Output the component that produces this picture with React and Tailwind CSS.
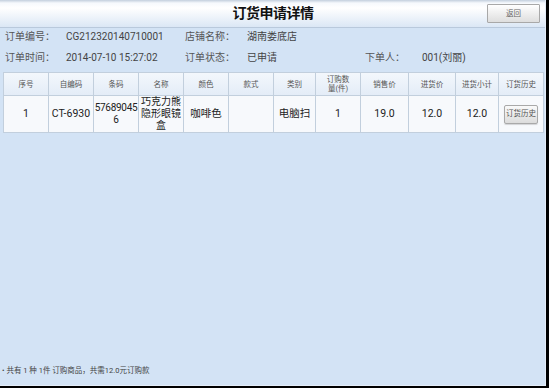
import React from "react";

const cols = [
  { w: 45, h: "序号", v: "1" },
  { w: 45, h: "自编码", v: "CT-6930" },
  { w: 45, h: "条码", v: "barcode" },
  { w: 45, h: "名称", v: "name" },
  { w: 45, h: "颜色", v: "咖啡色" },
  { w: 45, h: "款式", v: "" },
  { w: 42, h: "类别", v: "电脑扫" },
  { w: 45, h: "qty", v: "1" },
  { w: 48, h: "销售价", v: "19.0" },
  { w: 47, h: "进货价", v: "12.0" },
  { w: 43, h: "进货小计", v: "12.0" },
  { w: 45, h: "订货历史", v: "btn" },
];

function Cell({ v }) {
  if (v === "barcode")
    return (
      <span className="leading-[12px] block text-[10px] tracking-[-0.3px]">
        57689045
        <br />6
      </span>
    );
  if (v === "name")
    return (
      <span className="leading-[12px] block text-[10px]">
        巧克力熊
        <br />
        隐形眼镜
        <br />盒
      </span>
    );
  if (v === "btn")
    return (
      <button className="w-[34px] h-[19px] mx-auto block rounded-[2px] border border-[#a9a9a9] bg-gradient-to-b from-[#fafafa] to-[#dcdcdc] text-[7.5px] text-[#555] leading-none shadow-[0_1px_1px_rgba(0,0,0,0.15)]">
        订货历史
      </button>
    );
  return <span>{v}</span>;
}

export default function App() {
  const font = "font-['Roboto','Noto_Sans_CJK_SC',sans-serif]";
  return (
    <div className={`w-[549px] h-[388px] bg-black ${font}`}>
      <div className="w-[546px] h-[386px] bg-[#d3e3f5] border-r border-b border-[#e4edf8] flex flex-col">
        {/* header bar */}
        <div className="h-[28px] shrink-0 grid grid-cols-[1fr_auto_1fr] items-center [background-image:linear-gradient(to_bottom,#c3cfdd_0px,#f6f9fd_3px,#ffffff_8px,#dbe7f5_27px)] border-b border-[#b9c9dc]">
          <div />
          <div className="text-[14px] font-bold text-[#111] tracking-[-0.5px] pl-[1px]">订货申请详情</div>
          <div className="flex justify-end pr-[5px]">
            <button className="w-[53px] h-[19px] border border-[#a8a8a8] rounded-[1px] bg-gradient-to-b from-[#ffffff] to-[#dedede] text-[7.5px] text-[#666] leading-none">
              返回
            </button>
          </div>
        </div>

        {/* info */}
        <div className="pl-[5px] text-[10px] text-[#555]">
          <div className="grid grid-cols-[61px_119px_62px_118px_57px_1fr] h-[16px] items-center">
            <span>订单编号：</span>
            <span className="text-[#444]">CG212320140710001</span>
            <span>店铺名称：</span>
            <span className="text-[#444]">湖南娄底店</span>
            <span />
            <span />
          </div>
          <div className="grid grid-cols-[61px_119px_62px_118px_57px_1fr] h-[16px] items-center mt-[5px]">
            <span>订单时间：</span>
            <span className="text-[#444]">2014-07-10 15:27:02</span>
            <span>订单状态：</span>
            <span className="text-[#444]">已申请</span>
            <span>下单人：</span>
            <span className="text-[#444]">001(刘丽)</span>
          </div>
        </div>

        {/* table */}
        <div className="pl-[3px] mt-[7px]">
          <table className="table-fixed border-collapse w-[540px]">
            <colgroup>
              {cols.map((c, i) => (
                <col key={i} style={{ width: c.w }} />
              ))}
            </colgroup>
            <thead>
              <tr className="h-[23px] bg-gradient-to-b from-[#f3f7fc] to-[#e3ecf7]">
                {cols.map((c, i) => (
                  <th
                    key={i}
                    className="border border-[#c2cfdd] text-[7.5px] font-normal text-[#555] leading-[9px] p-0"
                  >
                    {c.h === "qty" ? (
                      <>
                        订购数
                        <br />
                        量(件)
                      </>
                    ) : (
                      c.h
                    )}
                  </th>
                ))}
              </tr>
            </thead>
            <tbody>
              <tr className="h-[36px] bg-[#f7f9fc]">
                {cols.map((c, i) => (
                  <td
                    key={i}
                    className="border border-[#c2cfdd] text-center text-[10.5px] text-[#222] p-0 align-middle"
                  >
                    <Cell v={c.v} />
                  </td>
                ))}
              </tr>
            </tbody>
          </table>
        </div>

        <div className="flex-1" />
        <div className="pl-[2px] pb-[9px] text-[7.5px] text-[#444] leading-[10px]">
          • 共有 1 种 1件 订购商品，共需12.0元订购款
        </div>
      </div>
    </div>
  );
}
